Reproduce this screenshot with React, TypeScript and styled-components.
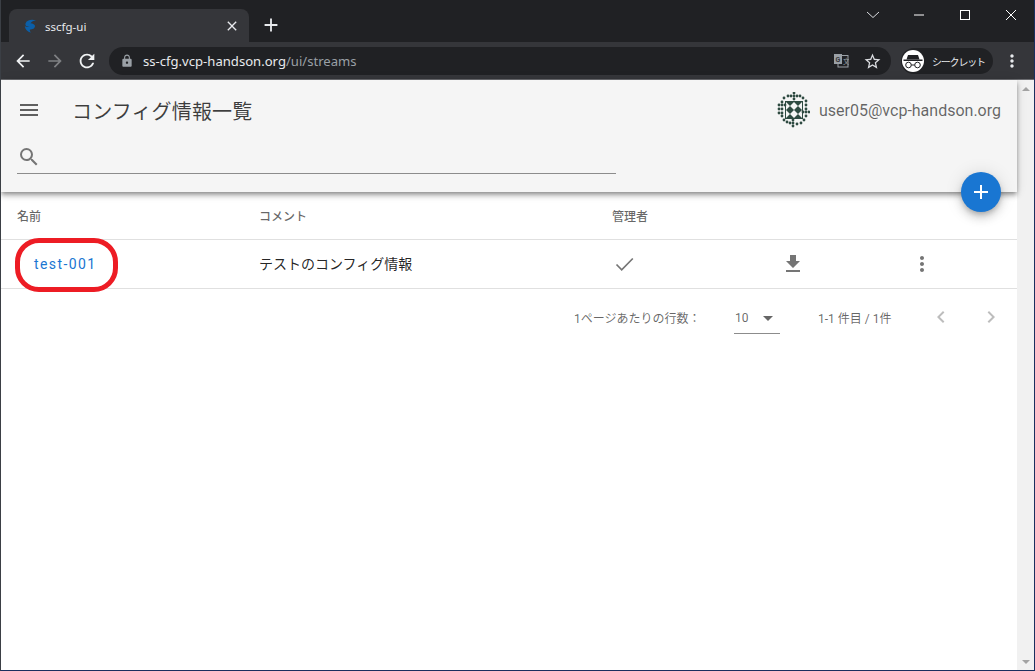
import React from 'react'
import styled, { createGlobalStyle } from 'styled-components'
import {
  MdAdd,
  MdArrowBack,
  MdArrowDropDown,
  MdArrowForward,
  MdChevronLeft,
  MdChevronRight,
  MdClose,
  MdFileDownload,
  MdLock,
  MdMenu,
  MdMoreVert,
  MdOutlineStarBorder,
  MdRefresh,
  MdSearch,
} from 'react-icons/md'

const GlobalStyle = createGlobalStyle`
  html, body { margin: 0; padding: 0; height: 100%; background: #fff; }
  #root { height: 100%; }
  * { box-sizing: border-box; }
`

function Favicon() {
  return (
    <svg width="16" height="16" viewBox="0 0 16 16">
      <path d="M14 2.500C10 1 4.500 2 3.500 5.500c-.6 2.200 1.500 3.200 4 3.400-1.700.4-3.600 0-4.700-.9C3 11 5.500 14 9 14.500c-1-1-1.500-2-1-3 2.500 0 5-1 5-3.500 0-1.500-2-2.500-4.500-2.800C9.500 3.600 11.500 2.800 14 2.500z" fill="#0b5fa8" />
    </svg>
  )
}

function TranslateIcon() {
  return (
    <svg width="16" height="16" viewBox="0 0 16 16">
      <rect x="5" y="2.500" width="10" height="11.500" fill="none" stroke="#9aa0a6" />
      <rect x="1" y="1" width="8" height="10" fill="#9aa0a6" />
      <text x="2.500" y="8.500" fontSize="7" fontFamily="Roboto" fontWeight="700" fill="#35363a">G</text>
      <text x="10" y="11" fontSize="6.500" fontFamily="Noto Sans CJK JP" fill="#9aa0a6">文</text>
    </svg>
  )
}

function IncognitoIcon() {
  return (
    <svg width="20" height="16" viewBox="0 0 20 16">
      <path d="M5 2h10l1.500 4.500h-13z" fill="#202124" />
      <rect x="0.500" y="6.500" width="19" height="1.500" fill="#202124" />
      <circle cx="5.500" cy="12" r="2.800" fill="none" stroke="#202124" strokeWidth="1" />
      <circle cx="14.500" cy="12" r="2.800" fill="none" stroke="#202124" strokeWidth="1" />
      <rect x="8.300" y="11.500" width="3.400" height="1" fill="#202124" />
    </svg>
  )
}

function CheckMark() {
  return (
    <svg width="24" height="24" viewBox="0 0 24 24">
      <path d="M4.500 12.500 L9.700 17.800 L20.800 6.500" fill="none" stroke="currentColor" strokeWidth="1.700" />
    </svg>
  )
}

// identicon: broken ring of dots round a square of four crossed tiles
const ringDots: [number, number][] = [
  [12, 4], [15, 4], [18, 1], [18, 4], [18, 7], [21, 4], [24, 4], [8, 6], [27, 6], [30, 9],
  [3, 13], [6, 13], [9, 13], [6, 10], [30, 13], [6, 17], [3, 17], [6, 21], [3, 21], [6, 24],
  [30, 17], [27, 20], [30, 20], [33, 20], [30, 24], [8, 28], [11, 30], [17, 28], [17, 31], [17, 34],
  [14, 31], [21, 32], [25, 31], [28, 28],
]

const tileCorners: [number, number][] = [
  [10, 10],
  [18, 10],
  [10, 18],
  [18, 18],
]

function Identicon() {
  return (
    <svg width="34" height="36" viewBox="0 0 34 36">
      {ringDots.map(([x, y]) => (
        <circle key={`${x}-${y}`} cx={x} cy={y} r="1.400" fill="#2e4a41" />
      ))}
      <rect x="9.500" y="9.500" width="17" height="17" fill="none" stroke="#2e4a41" />
      {tileCorners.map(([x, y]) => (
        <path key={`${x}-${y}`} d={`M${x} ${y}h8l-4 4zM${x} ${y + 8}h8l-4-4z`} fill="#2e4a41" />
      ))}
    </svg>
  )
}

function App() {
  return (
    <Frame>
      <GlobalStyle />
      <TitleBar>
        <Tab>
          <Favicon />
          <TabTitle>sscfg-ui</TabTitle>
          <TabClose>
            <MdClose size={16} />
          </TabClose>
        </Tab>
        <NewTab>
          <MdAdd size={22} />
        </NewTab>
        <WindowControls>
          <WindowButton>
            <svg width="14" height="8" viewBox="0 0 14 8">
              <path d="M1 1l6 5.500L13 1" fill="none" stroke="#dadce0" />
            </svg>
          </WindowButton>
          <WindowButton>
            <svg width="12" height="12" viewBox="0 0 12 12">
              <path d="M1 6h10" stroke="#fff" />
            </svg>
          </WindowButton>
          <WindowButton>
            <svg width="12" height="12" viewBox="0 0 12 12">
              <rect x="1.500" y="1.500" width="9" height="9" fill="none" stroke="#fff" />
            </svg>
          </WindowButton>
          <WindowButton>
            <svg width="12" height="12" viewBox="0 0 12 12">
              <path d="M1 1l10 10M11 1L1 11" stroke="#fff" />
            </svg>
          </WindowButton>
        </WindowControls>
      </TitleBar>
      <Toolbar>
        <NavButton>
          <MdArrowBack size={20} />
        </NavButton>
        <NavButton $disabled>
          <MdArrowForward size={20} />
        </NavButton>
        <NavButton>
          <MdRefresh size={22} />
        </NavButton>
        <Omnibox>
          <MdLock size={14} color="#9aa0a6" />
          <Url>
            ss-cfg.vcp-handson.org<UrlPath>/ui/streams</UrlPath>
          </Url>
          <OmniIcons>
            <TranslateIcon />
            <MdOutlineStarBorder size={19} color="#dadce0" />
          </OmniIcons>
        </Omnibox>
        <ProfilePill>
          <ProfileBadge>
            <IncognitoIcon />
          </ProfileBadge>
          シークレット
        </ProfilePill>
        <ChromeMenu>
          <MdMoreVert size={20} />
        </ChromeMenu>
      </Toolbar>
      <Viewport>
        <Page>
          <AppBar>
            <AppBarTop>
              <MenuButton>
                <MdMenu size={24} />
              </MenuButton>
              <PageTitle>コンフィグ情報一覧</PageTitle>
              <UserArea>
                <Identicon />
                <UserName>user05@vcp-handson.org</UserName>
              </UserArea>
            </AppBarTop>
            <SearchBox>
              <MdSearch size={24} />
            </SearchBox>
            <Fab>
              <MdAdd size={24} />
            </Fab>
          </AppBar>
          <Table>
            <HeaderRow>
              <HeaderCell>名前</HeaderCell>
              <HeaderCell>コメント</HeaderCell>
              <HeaderCell>管理者</HeaderCell>
              <HeaderCell />
              <HeaderCell />
            </HeaderRow>
            <BodyRow>
              <NameCell>
                test-001
                <Annotation />
              </NameCell>
              <CommentCell>テストのコンフィグ情報</CommentCell>
              <IconCell>
                <CheckMark />
              </IconCell>
              <IconCell>
                <MdFileDownload size={24} />
              </IconCell>
              <IconCell>
                <MdMoreVert size={24} />
              </IconCell>
            </BodyRow>
          </Table>
          <Pagination>
            <PagerLabel>1ページあたりの行数：</PagerLabel>
            <PerPage>
              10
              <MdArrowDropDown size={24} />
            </PerPage>
            <PagerRange>1-1 件目 / 1件</PagerRange>
            <PagerArrow>
              <MdChevronLeft size={24} />
            </PagerArrow>
            <PagerArrow>
              <MdChevronRight size={24} />
            </PagerArrow>
          </Pagination>
        </Page>
        <Scrollbar>
          <ScrollArrow $up />
          <ScrollArrow />
        </Scrollbar>
      </Viewport>
    </Frame>
  )
}

const Frame = styled.div`
  display: flex;
  flex-direction: column;
  height: 671px;
  width: 1035px;
  overflow: hidden;
  border-left: 1px solid #3b3f45;
  border-right: 1px solid #1a2f5f;
  border-bottom: 1px solid #1a2f5f;
  font-family: Roboto, 'Noto Sans CJK JP', sans-serif;
`

const TitleBar = styled.div`
  display: flex;
  align-items: flex-end;
  height: 42px;
  flex: none;
  background: #202124;
  padding-left: 8px;
`

const Tab = styled.div`
  display: flex;
  align-items: center;
  width: 240px;
  height: 33px;
  padding: 0 9px 0 13px;
  background: #35363a;
  border-radius: 8px 8px 0 0;
  color: #e8eaed;
`

const TabTitle = styled.span`
  flex: 1;
  margin: 2px 0 0 7px;
  font-family: 'Noto Sans', sans-serif;
  font-size: 11.5px;
`

const TabClose = styled.span`
  display: flex;
  color: #e8eaed;
`

const NewTab = styled.div`
  display: flex;
  align-self: center;
  margin: 8px 0 0 11px;
  color: #e8eaed;
`

const WindowControls = styled.div`
  display: flex;
  align-self: flex-start;
  margin-left: auto;
`

const WindowButton = styled.div`
  display: flex;
  align-items: center;
  justify-content: center;
  width: 46px;
  height: 30px;
`

const Toolbar = styled.div`
  display: flex;
  align-items: center;
  flex: none;
  height: 38px;
  padding: 1px 0 0 6px;
  background: #35363a;
  border-bottom: 1px solid #6b6c70;
`

const NavButton = styled.div<{ $disabled?: boolean }>`
  display: flex;
  justify-content: center;
  width: 32px;
  color: ${(p) => (p.$disabled ? '#7f8184' : '#f1f3f4')};
`

const Omnibox = styled.div`
  display: flex;
  align-items: center;
  width: 782px;
  height: 28px;
  margin-left: 6px;
  padding: 0 9px 0 11px;
  border-radius: 14px;
  background: #202124;
`

const Url = styled.span`
  margin-left: 9px;
  font-family: 'Noto Sans', sans-serif;
  font-size: 13.1px;
  color: #e8eaed;
`

const UrlPath = styled.span`
  color: #9aa0a6;
`

const OmniIcons = styled.div`
  display: flex;
  align-items: center;
  gap: 14px;
  margin-left: auto;
`

const ProfilePill = styled.div`
  display: flex;
  align-items: center;
  gap: 8px;
  width: 92px;
  height: 26px;
  margin-left: 10px;
  padding-left: 1px;
  border-radius: 13px;
  background: #202124;
  color: #e8eaed;
  font-size: 10px;
  white-space: nowrap;
  letter-spacing: -1.2px;
`

const ProfileBadge = styled.span`
  display: flex;
  align-items: center;
  justify-content: center;
  width: 22px;
  height: 22px;
  border-radius: 50%;
  background: #fff;
  flex: none;
`

const ChromeMenu = styled.div`
  display: flex;
  margin-left: 9px;
  color: #e8eaed;
`

const Viewport = styled.div`
  display: flex;
  flex: 1;
  min-height: 0;
`

const Page = styled.div`
  flex: 1;
  min-width: 0;
  background: #fff;
`

const AppBar = styled.header`
  position: relative;
  height: 112px;
  background: #f5f5f5;
  box-shadow: 0 2px 4px -1px rgba(0, 0, 0, 0.3), 0 4px 5px 0 rgba(0, 0, 0, 0.2), 0 1px 10px 0 rgba(0, 0, 0, 0.12);
  z-index: 1;
`

const AppBarTop = styled.div`
  display: flex;
  align-items: center;
  height: 60px;
  padding: 0 16px 0 16px;
`

const MenuButton = styled.div`
  display: flex;
  width: 55px;
  color: #5f5f5f;
`

const PageTitle = styled.h1`
  margin: 0;
  font-size: 20px;
  font-weight: 400;
  letter-spacing: 0.15px;
  color: rgba(0, 0, 0, 0.75);
`

const UserArea = styled.div`
  display: flex;
  align-items: center;
  gap: 9px;
  margin-left: auto;
`

const UserName = styled.span`
  font-size: 16px;
  color: rgba(0, 0, 0, 0.6);
`

const SearchBox = styled.div`
  display: flex;
  align-items: center;
  width: 599px;
  height: 30px;
  margin: 4px 0 0 16px;
  padding-bottom: 4px;
  border-bottom: 1px solid #8c8c8c;
  color: #757575;
`

const Fab = styled.button`
  position: absolute;
  right: 16px;
  bottom: -20px;
  display: flex;
  align-items: center;
  justify-content: center;
  width: 40px;
  height: 40px;
  padding: 0;
  border: none;
  border-radius: 50%;
  background: #1976d2;
  color: #fff;
  box-shadow: 0 3px 5px -1px rgba(0, 0, 0, 0.2), 0 6px 10px 0 rgba(0, 0, 0, 0.14), 0 1px 18px 0 rgba(0, 0, 0, 0.12);
`

const Table = styled.div`
  display: flex;
  flex-direction: column;
`

const Row = styled.div`
  display: grid;
  grid-template-columns: 242px 353px 169px 129px 1fr;
  align-items: center;
  padding-left: 16px;
  border-bottom: 1px solid #e0e0e0;
`

const HeaderRow = styled(Row)`
  height: 48px;
`

const BodyRow = styled(Row)`
  height: 49px;
`

const HeaderCell = styled.div`
  font-size: 12px;
  font-weight: 500;
  color: rgba(0, 0, 0, 0.6);
`

const BodyCell = styled.div`
  font-size: 14px;
  color: rgba(0, 0, 0, 0.87);
`

const CommentCell = styled(BodyCell)`
  padding-bottom: 2px;
`

const NameCell = styled(BodyCell)`
  position: relative;
  padding-left: 17px;
  color: #1976d2;
  letter-spacing: 1.4px;
`

const IconCell = styled.div`
  display: flex;
  color: #757575;
`

const Annotation = styled.span`
  position: absolute;
  left: -2px;
  top: calc(50% - 26px);
  width: 103px;
  height: 54px;
  border: 5px solid #ed1c24;
  border-radius: 24px;
`

const Pagination = styled.div`
  display: flex;
  align-items: center;
  height: 56px;
  padding-left: 573px;
  font-size: 12px;
  color: rgba(0, 0, 0, 0.6);
`

const PagerLabel = styled.span`
  flex: none;
  width: 160px;
`

const PerPage = styled.div`
  display: flex;
  align-items: center;
  justify-content: space-between;
  flex: none;
  width: 46px;
  height: 32px;
  margin-top: 2px;
  padding: 0 0 0 1px;
  border-bottom: 1px solid #8c8c8c;
`

const PagerRange = styled.span`
  flex: none;
  width: 111px;
  margin-left: 38px;
`

const PagerArrow = styled.span`
  display: flex;
  flex: none;
  width: 50px;
  color: #bdbdbd;
`

const Scrollbar = styled.div`
  display: flex;
  flex-direction: column;
  justify-content: space-between;
  align-items: center;
  flex: none;
  width: 17px;
  padding: 7px 0 6px;
  background: #f1f1f1;
`

const ScrollArrow = styled.span<{ $up?: boolean }>`
  width: 0;
  height: 0;
  border-left: 4px solid transparent;
  border-right: 4px solid transparent;
  ${(p) => (p.$up ? 'border-bottom: 4px solid #a3a3a3;' : 'border-top: 4px solid #a3a3a3;')}
`

export default App
